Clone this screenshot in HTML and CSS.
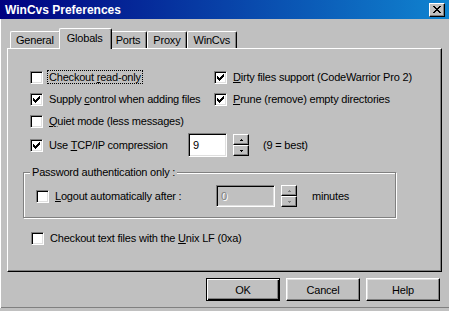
FILE: index.html
```html
<!DOCTYPE html>
<html>

<head>
	<meta charset="UTF-8">
	<title>WinCvs Preferences</title>
	<link rel="stylesheet" href="styles.css">
</head>

<body>
	<svg width="0" height="0" class="defs">
		<symbol id="tick" viewBox="0 0 7 7">
			<path d="M6 0h1v1h-1z M5 1h2v1h-2z M0 2h1v1h-1z M4 2h3v1h-3z M0 3h2v1h-2z M3 3h3v1h-3z M0 4h5v1h-5z M1 5h3v1h-3z M2 6h1v1h-1z" />
		</symbol>
		<symbol id="up" viewBox="0 0 3 2">
			<path d="M1 0h1v1h1v1h-3v-1h1z" />
		</symbol>
		<symbol id="down" viewBox="0 0 3 2">
			<path d="M0 0h3v1h-1v1h-1v-1h-1z" />
		</symbol>
	</svg>
	<div class="window">
		<div class="titlebar">
			<span class="title">WinCvs Preferences</span>
			<span class="close">
				<svg width="8" height="7" viewBox="0 0 8 7">
					<path d="M0 0h2v1h-2z M6 0h2v1h-2z M1 1h2v1h-2z M5 1h2v1h-2z M2 2h4v1h-4z M3 3h2v1h-2z M2 4h4v1h-4z M1 5h2v1h-2z M5 5h2v1h-2z M0 6h2v1h-2z M6 6h2v1h-2z" />
				</svg>
			</span>
		</div>
		<div class="tabs">
			<div class="tab">General</div>
			<div class="tab active">Globals</div>
			<div class="tab">Ports</div>
			<div class="tab">Proxy</div>
			<div class="tab">WinCvs</div>
		</div>
		<div class="panel">
			<div class="opts">
				<label class="check"><span class="box"></span><span class="focus">Checkout <u>r</u>ead-only</span></label>
				<label class="check"><span class="box"><svg width="7" height="7"><use href="#tick" /></svg></span><span><u>D</u>irty files support (CodeWarrior Pro 2)</span></label>
				<label class="check"><span class="box"><svg width="7" height="7"><use href="#tick" /></svg></span><span>Supply <u>c</u>ontrol when adding files</span></label>
				<label class="check"><span class="box"><svg width="7" height="7"><use href="#tick" /></svg></span><span><u>P</u>rune (remove) empty directories</span></label>
				<label class="check"><span class="box"></span><span><u>Q</u>uiet mode (less messages)</span></label>
				<div></div>
				<div class="wide">
					<label class="check tcp"><span class="box"><svg width="7" height="7"><use href="#tick" /></svg></span><span>Use <u>T</u>CP/IP compression</span></label>
					<span class="field">9</span>
					<span class="spin">
						<span><svg width="3" height="2"><use href="#up" /></svg></span>
						<span><svg width="3" height="2"><use href="#down" /></svg></span>
					</span>
					<span class="hint">(9 = best)</span>
				</div>
			</div>
			<div class="group">
				<span class="legend">Password authentication only :</span>
				<div class="grouprow">
					<label class="check logout"><span class="box"></span><span><u>L</u>ogout automatically after :</span></label>
					<span class="field disabled">0</span>
					<span class="spin disabled">
						<span><svg width="3" height="2"><use href="#up" /></svg></span>
						<span><svg width="3" height="2"><use href="#down" /></svg></span>
					</span>
					<span class="unit">minutes</span>
				</div>
			</div>
			<label class="check last"><span class="box"></span><span>Checkout text files with the <u>U</u>nix LF (0xa)</span></label>
		</div>
		<div class="buttons">
			<a class="btn default">OK</a>
			<a class="btn">Cancel</a>
			<a class="btn">Help</a>
		</div>
	</div>
</body>

</html>
```

FILE: styles.css
```css
body {
	margin: 0;
	background: #c0c0c0;
	font-family: "Liberation Sans", Arial, sans-serif;
	font-size: 11px;
	letter-spacing: -0.2px;
	color: #000;
}

.defs {
	position: absolute;
}

.window {
	width: 449px;
	height: 308px;
	display: flex;
	flex-direction: column;
	box-shadow: inset 1px 0 #fff, inset 0 -1px #808080;
}

u {
	text-decoration: underline;
	text-underline-offset: 1px;
}

/* title bar */
.titlebar {
	height: 19px;
	display: flex;
	align-items: center;
	justify-content: space-between;
	padding: 0 4px 0 5px;
	background: linear-gradient(to right, #000080, #1084d0);
	color: #fff;
	font-size: 12px;
	font-weight: bold;
	letter-spacing: 0;
}

.title {
	padding-top: 1px;
}

.close {
	width: 16px;
	height: 14px;
	box-sizing: border-box;
	display: flex;
	align-items: center;
	justify-content: center;
	background: #c0c0c0;
	border: 1px solid;
	border-color: #fff #000 #000 #fff;
	box-shadow: inset -1px -1px #808080;
}

.close svg {
	display: block;
}

/* tabs */
.tabs {
	display: flex;
	align-items: flex-end;
	height: 20px;
	margin-top: 9px;
	padding-left: 10px;
}

.tab {
	height: 17px;
	box-sizing: border-box;
	display: flex;
	align-items: center;
	padding: 0 6px 0 5px;
	border-top: 1px solid #fff;
	border-left: 1px solid #fff;
	border-right: 1px solid #000;
	border-radius: 2px 2px 0 0;
	box-shadow: inset -1px 0 #808080;
}

.tab.active {
	position: relative;
	z-index: 1;
	height: 21px;
	margin: 0 -2px -1px;
	padding: 0 8px 2px 7px;
	background: #c0c0c0;
}

.panel {
	height: 224px;
	box-sizing: border-box;
	margin: 0 7px;
	padding-top: 17px;
	border: 1px solid;
	border-color: #fff #000 #000 #fff;
	box-shadow: inset -1px -1px #808080;
}

/* options */
.opts {
	display: grid;
	grid-template-columns: 184px 1fr;
	grid-template-rows: 22px 22px 22px 26px;
	padding-left: 22px;
}

.check {
	display: flex;
	align-items: center;
	gap: 6px;
	white-space: nowrap;
}

.box {
	width: 13px;
	height: 13px;
	box-sizing: border-box;
	flex: none;
	background: #fff;
	border: 1px solid;
	border-color: #808080 #fff #fff #808080;
	box-shadow: inset 1px 1px #000, inset -1px -1px #dfdfdf;
}

.box svg {
	display: block;
	margin: 2px;
}

.focus {
	outline: 1px dotted #000;
	outline-offset: 0;
	padding: 0 1px;
	margin-left: -1px;
}

.wide {
	grid-column: 1 / -1;
	display: flex;
	align-items: center;
}

.tcp {
	width: 158px;
	align-self: stretch;
}

.field {
	width: 39px;
	height: 24px;
	box-sizing: border-box;
	display: flex;
	align-items: center;
	padding-left: 4px;
	background: #fff;
	border: 1px solid;
	border-color: #808080 #fff #fff #808080;
	box-shadow: inset 1px 1px #000, inset -1px -1px #dfdfdf;
}

.field.disabled {
	width: 59px;
	height: 22px;
	background: #c0c0c0;
	color: #808080;
	text-shadow: 1px 1px #fff;
}

.spin {
	display: flex;
	flex-direction: column;
	margin-left: 6px;
}

.spin span {
	width: 16px;
	height: 11px;
	box-sizing: border-box;
	display: flex;
	align-items: center;
	justify-content: center;
	border: 1px solid;
	border-color: #fff #000 #000 #fff;
	box-shadow: inset -1px -1px #808080;
}

.spin svg {
	display: block;
}

.spin.disabled svg {
	fill: #808080;
}

.hint {
	margin-left: 14px;
}

/* group box */
.group {
	position: relative;
	width: 373px;
	height: 46px;
	box-sizing: border-box;
	margin: 14px 0 0 15px;
	padding: 12px 0 0 12px;
	border: 1px solid #808080;
	box-shadow: 1px 1px #fff, inset 1px 1px #fff;
}

.legend {
	position: absolute;
	top: -7px;
	left: 6px;
	padding: 0 2px;
	background: #c0c0c0;
}

.grouprow {
	display: flex;
	align-items: center;
	height: 22px;
}

.logout {
	width: 180px;
}

.unit {
	margin-left: 15px;
}

.last {
	height: 22px;
	margin: 9px 0 0 23px;
}

/* buttons */
.buttons {
	display: flex;
	justify-content: flex-end;
	gap: 6px;
	margin: 6px 9px 0 0;
}

.btn {
	width: 74px;
	height: 23px;
	box-sizing: border-box;
	display: flex;
	align-items: center;
	justify-content: center;
	border: 1px solid;
	border-color: #fff #000 #000 #fff;
	box-shadow: inset -1px -1px #808080, inset 1px 1px #dfdfdf;
}

.btn.default {
	border-color: #000;
	box-shadow: inset 1px 1px #fff, inset -1px -1px #000, inset -2px -2px #808080;
}
```
